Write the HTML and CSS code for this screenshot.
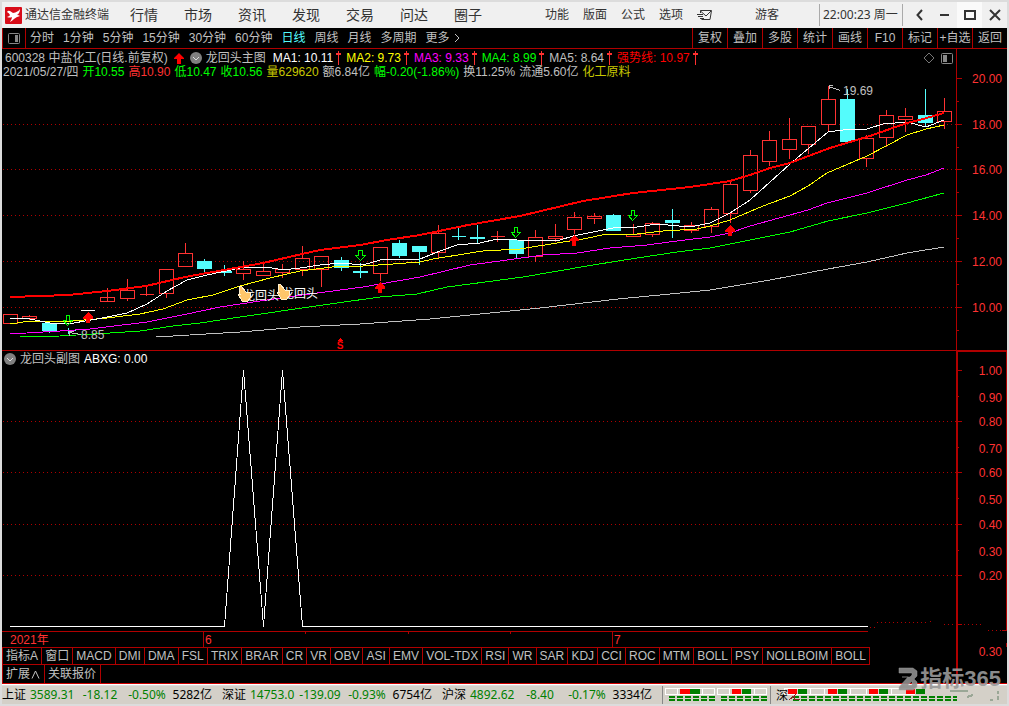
FILE: index.html
```html
<!DOCTYPE html>
<html lang="zh-CN">
<head>
<meta charset="utf-8">
<title>通达信金融终端</title>
<link rel="stylesheet" href="styles.css">
</head>
<body>
<div class="window">
  <header class="titlebar">
    <svg class="logo" viewBox="0 0 17 17" aria-hidden="true"><rect width="17" height="17" rx="1" fill="#d80c18"/><path d="M2 5Q3 3 5 4L8 6Q13 5 15 2Q15 6 12 8Q14 8 15 9Q11 10 9 12Q7 14 5 15Q7 12 7 10Q5 11 2 10Q5 9 5 8Q4 6 2 5Z" fill="#fff"/></svg>
    <h1 class="app-name">通达信金融终端</h1>
    <nav class="menu">
      <a href="#">行情</a><a href="#">市场</a><a href="#">资讯</a><a href="#">发现</a><a href="#">交易</a><a href="#">问达</a><a href="#">圈子</a>
    </nav>
    <nav class="menu-small">
      <a href="#">功能</a><a href="#">版面</a><a href="#">公式</a><a href="#">选项</a>
      <a href="#" aria-label="邮件"><svg class="mail" viewBox="0 0 15 11"><path d="M3.500 3V.500H14.500L13 9.500H4.500M3.500 1L9 6L14 1M0 4.500H6M1 6.500H6M3 8.500H7" fill="none" stroke="#333"/></svg></a>
    </nav>
    <a class="guest" href="#">游客</a>
    <time class="clock">22:00:23 周一</time>
    <div class="controls">
      <button aria-label="后退"><svg viewBox="0 0 14 14"><path d="M9 2L4.500 7L9 12" /></svg></button>
      <button aria-label="最小化"><svg viewBox="0 0 14 14"><path d="M2 7H11"/></svg></button>
      <button class="lit" aria-label="最大化"><svg viewBox="0 0 14 14"><path d="M2 3H12V11H2Z"/></svg></button>
      <button aria-label="关闭"><svg viewBox="0 0 14 14"><path d="M2 2L12 12M12 2L2 12"/></svg></button>
    </div>
  </header>

  <div class="toolbar">
    <button class="panel-toggle" aria-label="侧栏"><svg viewBox="0 0 12 11"><rect x=".5" y=".5" width="11" height="10" rx="1" fill="none" stroke="#888"/><rect x="7" y="2" width="3" height="7" fill="#888"/></svg></button>
    <div class="periods">
      <button>分时</button><button>1分钟</button><button>5分钟</button><button>15分钟</button><button>30分钟</button><button>60分钟</button><button class="active">日线</button><button>周线</button><button>月线</button><button>多周期</button><button class="more">更多<svg viewBox="0 0 6 10"><path d="M1 1L5 5L1 9" fill="none" stroke="#c0c0c0"/></svg></button>
    </div>
    <div class="tools">
      <button>复权</button><button>叠加</button><button>多股</button><button>统计</button><button>画线</button><button>F10</button><button>标记</button><button>+自选</button><button>返回</button>
    </div>
  </div>

  <main>
  <section class="chart">
    <div class="legend">
      <div class="legend-row wide">
        <span>600328 中盐化工(日线.前复权)</span>
        <svg class="up-fat" viewBox="0 0 10 11"><path d="M5 0L10 5V6H7V11H3V6H0V5Z" fill="#f00"/></svg>
        <svg class="round" viewBox="0 0 12 12"><circle cx="6" cy="6" r="6" fill="#808080"/><path d="M3 5L6 8L9 5" fill="none" stroke="#ddd"/></svg>
        <span class="indicator">龙回头主图</span>
        <span class="ma white">MA1: 10.11<svg viewBox="0 0 5 14"><path d="M2 0h1v2h2v2h-2v10h-1v-10h-2v-2h2z"/></svg></span>
        <span class="ma yellow">MA2: 9.73<svg viewBox="0 0 5 14"><path d="M2 0h1v2h2v2h-2v10h-1v-10h-2v-2h2z"/></svg></span>
        <span class="ma magenta">MA3: 9.33<svg viewBox="0 0 5 14"><path d="M2 0h1v2h2v2h-2v10h-1v-10h-2v-2h2z"/></svg></span>
        <span class="ma green">MA4: 8.99<svg viewBox="0 0 5 14"><path d="M2 0h1v2h2v2h-2v10h-1v-10h-2v-2h2z"/></svg></span>
        <span class="ma">MA5: 8.64<svg viewBox="0 0 5 14"><path d="M2 0h1v2h2v2h-2v10h-1v-10h-2v-2h2z"/></svg></span>
        <span class="ma strong">强势线: 10.97<svg viewBox="0 0 5 14"><path d="M2 0h1v2h2v2h-2v10h-1v-10h-2v-2h2z"/></svg></span>
        <svg class="view-icons" viewBox="0 0 30 12"><path d="M6 1L11 6L6 11L1 6Z" fill="none" stroke="#777"/><rect x="18.500" y="1.500" width="11" height="10" rx="1" fill="none" stroke="#888"/><rect x="20" y="3" width="4" height="7" fill="#888"/></svg>
      </div>
      <div class="legend-row quote">
        <span>2021/05/27/四</span><span class="green">开10.55</span><span class="red">高10.90</span><span class="green">低10.47</span><span class="green">收10.56</span><span class="gold">量629620</span><span>额6.84亿</span><span class="green">幅-0.20(-1.86%)</span><span>换11.25%</span><span>流通5.60亿</span><span class="gold">化工原料</span>
      </div>
    </div>
    <svg class="plot" viewBox="2 49 1005 302" role="img" aria-label="K线图">
      <g class="grid"><path d="M3 124.500H956M3 169.500H956M3 215.500H956M3 261.500H956M3 307.500H956"/></g>
      <g class="axis">
        <path d="M956.500 49V350M956 78.500h6M956 124.500h6M956 169.500h6M956 215.500h6M956 261.500h6M956 307.500h6M956 101.500h3M956 147.500h3M956 192.500h3M956 238.500h3M956 284.500h3M956 330.500h3M2 350.500H1007"/>
      </g>
      <g class="ticks">
        <text x="1002" y="83">20.00</text><text x="1002" y="129">18.00</text><text x="1002" y="174">16.00</text><text x="1002" y="220">14.00</text><text x="1002" y="266">12.00</text><text x="1002" y="312">10.00</text>
      </g>
      <g id="candles"></g>
      <path class="flat" d="M81 310.500h14"/>
      <g class="averages">
        <polyline stroke="#c0c0c0" points="156,337 240,332 300,327 360,324 430,319 470,315 540,308 618,299 660,295 710,290 770,280 828,269 867,262 907,253 944,247"/>
        <polyline stroke="#00ff00" points="20,337 60,336 110,333 140,331 173,326 200,323 240,317 330,304 380,297 417,294 447,287 470,284 523,277 593,265 637,258 677,252 710,248 730,244 790,232 828,221 867,213 907,203 944,193"/>
        <polyline stroke="#ff00ff" points="10,334 60,331 90,329 147,322 187,314 220,307 240,304 287,297 363,287 420,277 470,265 500,261 543,255 577,253 610,248 647,245 677,241 710,237 730,233 750,226 808,210 827,203 867,193 907,180 926,175 944,168"/>
        <polyline stroke="#ffff00" points="10,324 30,321 73,321 107,318 140,314 163,309 187,300 213,295 240,286 270,278 300,271 340,266 363,266 393,264 420,262 433,259 470,253 483,251 520,249 557,243 583,239 607,234 637,234 663,231 697,229 710,226 730,220 763,206 790,196 808,186 827,173 867,156 907,135 926,129 944,125"/>
        <polyline stroke="#ffffff" points="10,318 30,319 50,323 68,324 97,319 127,313 147,304 167,291 187,280 207,275 240,268 267,267 283,270 300,268 320,265 340,263 363,265 380,260 420,259 440,251 457,245 480,243 497,239 517,240 557,241 573,236 613,228 637,227 657,224 690,227 710,223 730,213 750,200 790,164 828,132 843,130 867,129 883,124 907,122 926,127 944,120"/>
        <polyline class="thick" points="10,297 40,296 68,295 107,291 146,286 185,277 224,270 263,263 302,254 320,250 360,245 387,240 420,235 468,225 520,216 583,201 633,193 690,187 730,181 750,175 770,168 790,163 830,148 850,142 870,136 907,123 923,119 944,113"/>
      </g>
      <g fill="#ff0000">
        <path d="M88 312l5 5v2h-3v4h-4v-4h-3v-2zM380 282l5 5v2h-3v4h-4v-4h-3v-2zM574 235l5 5v1h-3v5h-4v-5h-3v-1zM730 225l5 5v2h-3v4h-4v-4h-3v-2z"/>
      </g>
      <path class="sell" d="M66.500 315.500h3v5h3l-5 5l-4-5h3zM358.500 250.500h4v5h3l-5 5l-5-5h3zM514.500 227.500h3v5h3l-5 5l-4-5h3zM631.500 210.500h3v5h3l-5 5l-4-5h3z"/>
      <path class="pointer" d="M81 334.500L69 332.500M69 331v5M69 331l5 1M840 90.500L829 86.500M829 85v4M829 85l4 0"/>
      <text class="note" x="81" y="339">8.85</text>
      <text class="note" x="843" y="95">19.69</text>
      <text class="signal" x="243" y="300">龙回头</text>
      <text class="signal" x="282" y="298">龙回头</text>
      <path id="hand" class="hand" d="M239 287l2-1l5 6l4 0l1 5l-3 4h-6l-4-7l2 0z"/>
      <use href="#hand" x="39" y="-2"/>
      <path d="M337 341l3-3l3 3z" fill="#f00"/>
      <text class="dividend" x="340" y="349">S</text>
    </svg>
  </section>

  <section class="chart">
    <div class="legend sub">
      <div class="legend-row sub-row">
        <svg class="round" viewBox="0 0 12 12"><circle cx="6" cy="6" r="6" fill="#808080"/><path d="M3 5L6 8L9 5" fill="none" stroke="#ddd"/></svg>
        <span>龙回头副图</span><span class="white">ABXG: 0.00</span>
      </div>
    </div>
    <svg class="plot" viewBox="2 351 1005 296" role="img" aria-label="龙回头副图">
      <g class="grid"><path d="M3 421.500H956M3 472.500H956M3 524.500H956M3 575.500H956M870 627.500H878M877 622.500H928M930 621.500H932M944 624.500H984M988 630.500H1003"/></g>
      <g class="axis">
        <path class="bold" d="M957 351V647"/>
        <path d="M958 351.500H1006.500V631M1002 630.500h5M1006.500 643V647M958 370.500h4M958 421.500h4M958 472.500h4M958 524.500h4M958 575.500h4M958 624.500h4M958 396.500h1M958 447.500h1M958 498.500h1M958 550.500h1"/>
        <path d="M2 631.500H868M203.500 631V647M612.500 631V647M305.500 632v2M408.500 632v2M510.500 632v2"/>
      </g>
      <g class="ticks">
        <text x="1002" y="375">1.00</text><text x="1002" y="402">0.90</text><text x="1002" y="426">0.80</text><text x="1002" y="453">0.70</text><text x="1002" y="477">0.60</text><text x="1002" y="504">0.50</text><text x="1002" y="529">0.40</text><text x="1002" y="556">0.30</text><text x="1002" y="580">0.20</text>
      </g>
      <polyline class="spike" points="10,626.500 224.500,626.500 243.500,370 263.500,626.500 282.500,370 302.500,626.500 868,626.500"/>
      <g class="dates"><text x="10" y="644">2021年</text><text x="205" y="644">6</text><text x="614" y="644">7</text></g>
    </svg>
  </section>
  </main>

  <div class="lower">
    <div class="lower-tabs">
      <div class="tabs">
        <button>指标A</button><button>窗口</button><button>MACD</button><button>DMI</button><button>DMA</button><button>FSL</button><button>TRIX</button><button>BRAR</button><button>CR</button><button>VR</button><button>OBV</button><button>ASI</button><button>EMV</button><button>VOL-TDX</button><button>RSI</button><button>WR</button><button>SAR</button><button>KDJ</button><button>CCI</button><button>ROC</button><button>MTM</button><button>BOLL</button><button>PSY</button><button>NOLLBOIM</button><button>BOLL</button>
      </div>
      <div class="extras"><button>扩展<svg viewBox="0 0 9 9"><path d="M1 8.500L4.500 1L8 8.500" fill="none" stroke="#c0c0c0"/></svg></button><button>关联报价</button></div>
    </div>
    <div class="lower-axis">0.30</div>
  </div>

  <footer class="status">
    <div class="index"><span>上证</span><span class="down">3589.31</span><span class="down mid">-18.12</span><span class="down mid">-0.50%</span><span class="amount">5282亿</span></div>
    <div class="index"><span>深证</span><span class="down">14753.0</span><span class="down mid">-139.09</span><span class="down mid">-0.93%</span><span class="amount">6754亿</span></div>
    <div class="index"><span>沪深</span><span class="down">4892.62</span><span class="down mid">-8.40</span><span class="down mid">-0.17%</span><span class="amount">3334亿</span></div>
    <svg class="lights" viewBox="662 685 340 18" role="img" aria-label="行情温度">
      <path d="M662.500 685v18M770.500 685v18" stroke="#888"/>
      <path class="box" d="M665.500 687.500h49v6h-49zM717.500 687.500h49v6h-49zM677.500 687.500v6M702.500 687.500v6M729.500 687.500v6M754.500 687.500v6M784.500 687.500h130v6h-130zM810.500 687.500v6M824.500 687.500v6M850.500 687.500v6M866.500 687.500v6M891.500 687.500v6"/>
      <path d="M680 688h10v5h-10zM732 688h9v5h-9zM788 688h9v5h-9zM828 688h9v5h-9zM869 688h9v5h-9zM906 688h9v5h-9z" fill="#f00"/>
      <path d="M690 688h10v5h-10zM742 688h9v5h-9zM798 688h9v5h-9zM838 688h9v5h-9zM879 688h9v5h-9zM916 688h9v5h-9z" fill="#008000"/>
      <path class="dash" d="M669 696H715M669 699H715M721 696H767M721 699H767M793 696H957M793 699H957"/>
      <path d="M950 690h18M967 696l6-2M990 699h3M998 690v3M998 695v4" stroke="#9aa796" stroke-width="2"/>
      <text x="776" y="699">深</text><path d="M789 699l6-5l-1 4l6 1" fill="none" stroke="#822"/>
    </svg>
  </footer>
  <div class="watermark"><svg viewBox="0 0 20 24"><path d="M1 1h14l4 3v5l-3 3l3 3v5l-4 3H1v-3l9-10H4V10h8l2-2V6H1zM10 18h4v-4z" fill="#8e8e8e" stroke="#aaa" stroke-width=".5"/></svg>指标365</div>
</div>
<script src="script.js"></script>
</body>
</html>
```

FILE: styles.css
```css
* { box-sizing: border-box; }
body {
  margin: 0;
  background: #dcdcdc;
  color: #c0c0c0;
  font: 12px/14px "Liberation Sans", "Noto Sans CJK SC", sans-serif;
}
button {
  margin: 0; padding: 0; border: 0;
  background: none; color: inherit; font: inherit;
  white-space: nowrap;
}
a { color: inherit; text-decoration: none; }
svg { display: block; flex: none; }
.window {
  position: relative;
  min-height: 100vh;
  padding: 2px 2px 0;
}

.titlebar {
  display: flex;
  align-items: center;
  height: 26px;
  padding-left: 3px;
  background: #f0f0f0;
  color: #333;
  font-family: "Noto Sans", "Noto Sans CJK SC", sans-serif;
  white-space: nowrap;
}
.logo { width: 17px; height: 17px; }
.app-name { margin: 0 21px 0 3px; font-size: 12px; font-weight: 400; }
.menu { display: flex; gap: 26px; font-size: 14px; line-height: 20px; }
.menu-small { display: flex; align-items: center; gap: 14px; margin-left: auto; }
.mail { width: 15px; height: 11px; }
.guest { margin: 0 40px 0 43px; }
.clock {
  width: 84px;
  padding-left: 3px;
  border: solid #aaa;
  border-width: 0 1px;
  line-height: 22px;
}
.controls { display: flex; align-self: stretch; margin-left: 4px; }
.controls button { display: grid; place-items: center; width: 25px; }
.controls svg { width: 14px; height: 14px; fill: none; stroke: #333; stroke-width: 2; }
.controls .lit { background: #fafafa; }

.toolbar {
  display: flex;
  height: 21px;
  background: #000;
  border: solid #b00000;
  border-width: 0 0 1px 1px;
}
.panel-toggle { display: grid; place-items: center; width: 23px; border-right: 1px solid #b00000; }
.panel-toggle svg { width: 12px; height: 11px; }
.periods { display: flex; gap: 9px; margin-left: 4px; }
.periods .active { color: #54fcfc; }
.more { display: flex; align-items: center; gap: 4px; }
.more svg { width: 6px; height: 10px; }
.tools { display: flex; margin-left: auto; }
.tools button { width: 35px; border-left: 1px solid #b00000; }

.chart { display: grid; background: #000; }
.legend, .plot { grid-area: 1 / 1; }
.legend { z-index: 1; padding: 2px 0 0 1px; white-space: nowrap; }
.legend-row { display: flex; align-items: center; height: 14px; }
.wide { padding: 0 54px 0 2px; }
.quote { gap: 4px; }
.up-fat { width: 10px; height: 11px; margin: 0 6px; }
.round { width: 12px; height: 12px; }
.indicator { margin: 0 7px 0 4px; }
.ma { display: flex; gap: 3px; margin-right: 5px; }
.ma svg { width: 5px; height: 14px; fill: #ff3030; }
.view-icons { width: 30px; height: 12px; margin-left: auto; }
.sub { padding-top: 1px; }
.sub-row { gap: 4px; padding-left: 1px; }
.white { color: #fff; }
.yellow { color: #ff0; }
.magenta { color: #f0f; }
.green { color: #0f0; }
.red { color: #ff3232; }
.strong { color: #f00; }
.gold { color: #c8c800; }

.plot { width: 100%; height: auto; font-size: 12px; shape-rendering: crispEdges; }
.grid { stroke: #b00000; stroke-dasharray: 1 3; }
.axis { stroke: #b00000; fill: none; }
.bold { stroke-width: 2; }
.ticks { fill: #ff3232; text-anchor: end; }
.dates { fill: #ff3232; }
.averages { fill: none; stroke-width: 1; }
.thick { stroke: #f00; stroke-width: 2; }
.up { fill: none; stroke: #ff3232; }
.fall { fill: #54fcfc; stroke: #54fcfc; }
.flat, .spike { fill: none; stroke: #fff; }
.sell { fill: none; stroke: #0f0; }
.pointer { fill: none; stroke: #c0c0c0; }
.note { fill: #c0c0c0; }
.signal { fill: #fff; }
.hand { fill: #ffc66a; stroke: #fff0d0; }
.dividend { fill: #f00; font-size: 10px; font-weight: 700; text-anchor: middle; }

.lower {
  display: flex;
  height: 37px;
  background: #000;
  border-bottom: 1px solid #d00000;
  box-shadow: 0 1px #fff;
}
.lower-tabs { flex: 1; }
.tabs {
  display: flex;
  width: 91%;
  height: 18px;
  border: solid #b00000;
  border-width: 1px 0 1px 1px;
}
.tabs button { flex: 1 1 auto; border-right: 1px solid #b00000; }
.extras { display: flex; height: 18px; border-left: 1px solid #b00000; }
.extras button { display: flex; align-items: center; gap: 1px; padding: 0 4px 0 3px; border-right: 1px solid #b00000; }
.extras svg { width: 9px; height: 9px; }
.lower-axis {
  width: 51px;
  padding-right: 5px;
  border-left: 2px solid #b00000;
  color: #ff3232;
  line-height: 10px;
  text-align: right;
}

.status {
  display: flex;
  align-items: center;
  gap: 10px;
  height: 18px;
  margin-top: 2px;
  background: #d4d0c8;
  color: #000;
  font-family: "Noto Sans", "Noto Sans CJK SC", sans-serif;
  white-space: nowrap;
}
.index { display: grid; grid-template-columns: 28px 46px 48px 46px 42px; }
.down { color: #008000; }
.mid { text-align: center; }
.amount { text-align: right; }
.lights { width: 340px; height: 18px; shape-rendering: crispEdges; }
.box { fill: none; stroke: #fff; }
.dash { stroke: #008000; stroke-width: 2; stroke-dasharray: 6 2; }
.watermark {
  position: absolute;
  right: 8px;
  bottom: 15px;
  display: flex;
  align-items: center;
  gap: 2px;
  color: #999;
  font: 700 22px/24px "Liberation Sans", "Noto Sans CJK SC", sans-serif;
  opacity: 0.9;
}
.watermark svg { width: 20px; height: 24px; }
```

FILE: script.js
```js
// Each candle: centre x, body top, body bottom, wick top, wick bottom, falling flag.
const candles = [
  [10,314,323,314,323,0],[29,316,318,315,319,0],[49,323,330,323,332,1],[68,330,330,328,333,1],
  [107,297,301,288,297,0],[127,290,298,279,300,0],[146,294,294,286,295,0],[166,269,293,269,297,0],
  [185,253,266,243,266,0],[204,261,268,259,271,1],[224,271,272,265,275,1],[243,269,273,261,279,0],
  [263,271,275,263,275,0],[282,269,272,264,277,0],[302,258,269,246,275,0],[321,256,269,256,286,0],
  [341,260,267,257,270,1],[360,271,272,263,277,1],[380,247,273,247,280,0],[399,243,255,240,257,1],
  [419,246,251,246,264,1],[438,233,252,225,257,0],[458,236,236,228,239,1],[477,237,238,225,243,1],
  [497,236,236,231,241,0],[516,240,253,240,258,1],[535,237,256,230,261,0],[555,236,238,224,241,0],
  [574,217,229,212,233,0],[594,216,218,213,223,0],[613,215,230,214,230,1],[633,234,236,224,236,0],
  [652,223,234,222,236,0],[672,220,222,209,237,1],[691,225,230,222,232,0],[711,209,226,207,232,0],
  [730,184,213,181,222,0],[750,155,190,150,192,0],[769,140,161,131,165,0],[789,139,149,118,158,0],
  [808,126,144,126,153,0],[828,99,124,86,131,0],[847,99,141,89,141,1],[866,138,158,135,166,0],
  [886,115,137,110,146,0],[905,116,119,108,131,0],[925,115,122,89,126,1],[944,111,121,98,128,0]
];
const host = document.getElementById('candles');
for (const [x, top, bottom, high, low, falling] of candles) {
  const path = document.createElementNS('http://www.w3.org/2000/svg', 'path');
  const c = x + 0.5;
  path.setAttribute('class', falling ? 'fall' : 'up');
  path.setAttribute('d', `M${c - 7} ${top + 0.5}h14V${bottom + 0.5}h-14zM${c} ${high}V${top}M${c} ${bottom + 1}V${low + 1}`);
  host.append(path);
}
```
